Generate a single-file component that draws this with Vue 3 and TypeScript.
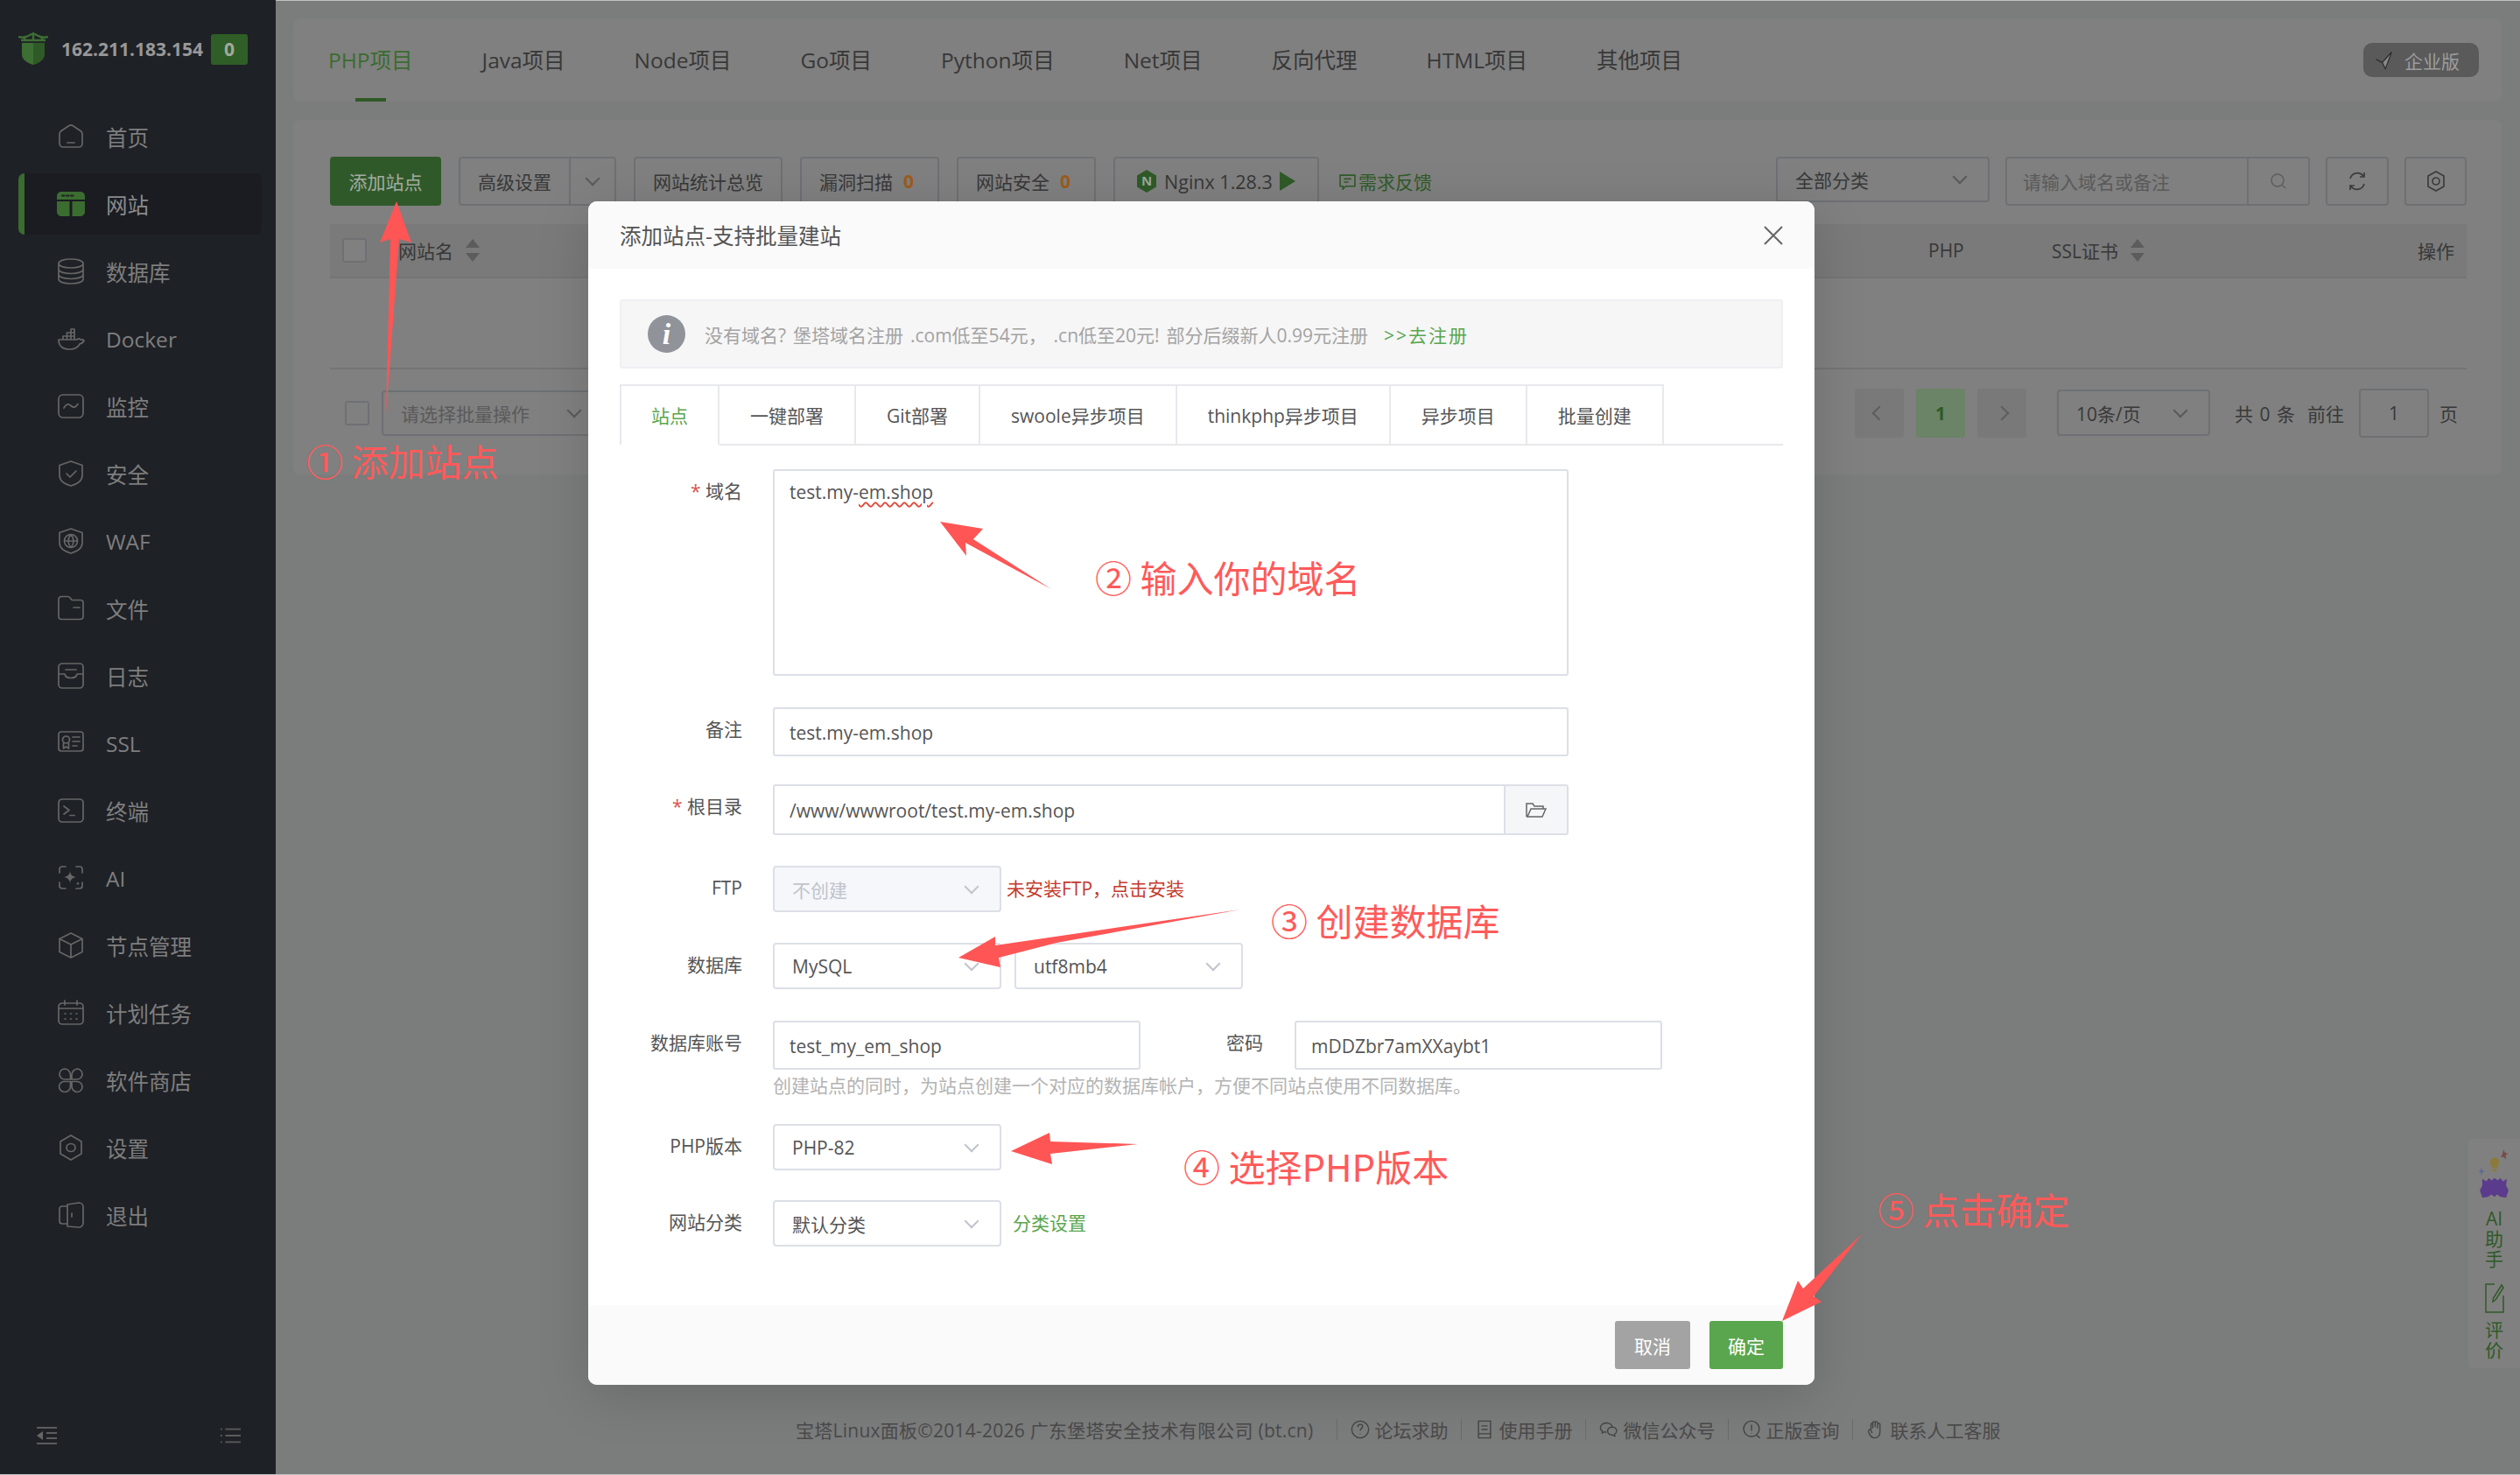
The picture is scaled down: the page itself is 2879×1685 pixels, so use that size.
<script setup lang="ts">
interface NavItem {
  name: string
  d: string
  fill?: string
  active?: boolean
}

const navItems: NavItem[] = [
  { name: '首页', d: 'M3 13c0-1.500.6-2.500 2-3.500L14 3.500c1.300-.8 2.700-.8 4 0l9 6c1.400 1 2 2 2 3.500v11c0 2.200-1.800 4-4 4H7c-2.200 0-4-1.800-4-4Z M12 23h8' },
  { name: '网站', d: '', active: true },
  { name: '数据库', d: 'M2 7c0-3 6-5 14-5s14 2 14 5v18c0 3-6 5-14 5S2 28 2 25Z M2 7c0 3 6 5 14 5s14-2 14-5 M2 13.500c0 3 6 5 14 5s14-2 14-5 M2 19.500c0 3 6 5 14 5s14-2 14-5' },
  { name: 'Docker', d: 'M2 17h21c.8-1.500 3-1.500 4 0 1.500-.3 3 0 4 1-1.500 3-3 3.500-4.500 3.500C24 26 20 28 15 28 7 28 2 25 2 17Z M7 17v-4h13v4 M11.500 17v-4 M16 17v-4 M11.500 13V9H20v4 M16 13V9 M16 9V5h4v4' },
  { name: '监控', d: 'M7 3h18c2.800 0 5 2.200 5 5v16c0 2.800-2.200 5-5 5H7c-2.800 0-5-2.200-5-5V8c0-2.800 2.200-5 5-5Z M8 18c3-5 5-5 8-2.500s5 2.500 8-2' },
  { name: '安全', d: 'M16 2 29 6.500V18c0 6-6 10-13 12C9 28 3 24 3 18V6.500Z M11 16l4 4 7-7' },
  { name: 'WAF', d: 'M16 2 29 6.500V18c0 6-6 10-13 12C9 28 3 24 3 18V6.500Z M16 8.500a7.500 7.500 0 1 0 0 15 7.500 7.500 0 0 0 0-15Z M8.500 16h15 M16 8.500c-4 4.500-4 10.500 0 15 4-4.500 4-10.500 0-15Z' },
  { name: '文件', d: 'M2 6c0-2 1.500-3.500 3.500-3.500h7c1.200 0 2 .5 2.700 1.500l2 2.500H27c1.700 0 3 1.300 3 3V25c0 2-1.500 3.500-3.500 3.500h-21C3.500 28.500 2 27 2 25Z M19 15h7' },
  { name: '日志', d: 'M6 2h20c2.200 0 4 1.800 4 4v20c0 2.200-1.800 4-4 4H6c-2.200 0-4-1.800-4-4V6c0-2.200 1.800-4 4-4Z M2 14h7c1 6 13 6 14 0h7 M10 9h12' },
  { name: 'SSL', d: 'M5 3h22c1.700 0 3 1.300 3 3v16c0 1.700-1.300 3-3 3H5c-1.700 0-3-1.300-3-3V6c0-1.700 1.300-3 3-3Z M10.500 8a4 4 0 1 0 0 8 4 4 0 0 0 0-8Z M7.500 16v6l3-2 3 2v-6 M18 9h8 M18 14h8 M18 19h5' },
  { name: '终端', d: 'M6 3h20c2.200 0 4 1.800 4 4v18c0 2.200-1.800 4-4 4H6c-2.200 0-4-1.800-4-4V7c0-2.200 1.800-4 4-4Z M8 11l6 4.500-6 4.500 M15 21.500h5' },
  {
    name: 'AI',
    d: 'M10 3H6C4 3 3 4 3 6v4 M22 3h4c2 0 3 1 3 3v4 M10 28H6c-2 0-3-1-3-3v-4 M22 28h4c2 0 3-1 3-3v-4',
    fill: 'M15 8c.5 4 2.500 6 6.500 7-4 1-6 3-6.500 7-.5-4-2.500-6-6.500-7 4-1 6-3 6.500-7Z M24 20c.2 1.500 1 2 2.200 2.300-1.200.3-2 1-2.200 2.300-.2-1.300-1-2-2.200-2.300 1.200-.3 2-.8 2.200-2.300Z'
  },
  { name: '节点管理', d: 'M16 2 29 8.500v15L16 30 3 23.500v-15Z M3 8.500 16 15l13-6.500 M16 15v15' },
  { name: '计划任务', d: 'M6 5h20c2.200 0 4 1.800 4 4v16c0 2.200-1.800 4-4 4H6c-2.200 0-4-1.800-4-4V9c0-2.200 1.800-4 4-4Z M9 2v5 M23 2v5 M2 11h28 M9 17h1 M15.500 17h1 M22 17h1 M9 23h1 M15.500 23h1 M22 23h1' },
  { name: '软件商店', d: 'M9 3a7 7 0 0 1 6.500 7v5H9a6 6 0 0 1 0-12Z M23 3a6 6 0 0 1 0 12h-6v-5a7 7 0 0 1 6-7Z M9 17.500h6.500V23a6.500 6.500 0 0 1-13 0 6 6 0 0 1 6.500-5.500Z M17 17.500h6a6 6 0 0 1 0 12 6.500 6.500 0 0 1-6-6.500Z' },
  { name: '设置', d: 'M16 2 28 9v14l-12 7-12-7V9Z M16 11.500c3 0 5 2 5 4.500s-2 4.500-5 4.500-5-2-5-4.500 2-4.500 5-4.500Z' },
  { name: '退出', d: 'M12 6H6C4.300 6 3 7.300 3 9v14c0 1.700 1.300 3 3 3h6 M12 4l13-2c2.800 0 5 2.200 5 5v18c0 2.800-2.200 5-5 5l-13-1Z M17 14v4' }
]

const projectTabs = ['PHP项目', 'Java项目', 'Node项目', 'Go项目', 'Python项目', 'Net项目', '反向代理', 'HTML项目', '其他项目']
const siteTabs = ['站点', '一键部署', 'Git部署', 'swoole异步项目', 'thinkphp异步项目', '异步项目', '批量创建']

const footerLinks = [
  { text: '论坛求助', d: 'M8 1a7 7 0 1 0 0 14A7 7 0 0 0 8 1Z M6 6c0-3 4-3 4-.5 0 1.700-2 1.700-2 3.500 M8 11.500v.5' },
  { text: '使用手册', d: 'M3 1h10v14H3Z M5.500 5h5 M5.500 8h5 M3 11.500h10' },
  { text: '微信公众号', d: 'M6 2.500C3 2.500 1 4.500 1 6.500c0 1.300.7 2.300 1.800 3L2.500 11l2-1c.5.1 1 .2 1.500.2 M11 6c-2.500 0-4 1.500-4 3.300s1.500 3.200 4 3.200l2 1-.3-1.500c1-.6 1.800-1.500 1.800-2.700C14.500 7.500 13 6 11 6Z M11 6c-.4-2-2.500-3.500-5-3.500' },
  { text: '正版查询', d: 'M8 1a6.500 6.500 0 1 0 0 13A6.500 6.500 0 0 0 8 1Z M8 4v5 M8 11v.5 M12 12.500l3 2.500' },
  { text: '联系人工客服', d: 'M4 8V4c0-1.500 1.500-1.500 1.500 0v3 M5.500 6V2.500C5.500 1 7.500 1 7.500 2.500V6 M7.500 6V2.500C7.500 1 9.500 1 9.500 2.500V7 M9.500 7V4c0-1.500 2-1.500 2 0v6c0 3-1.500 5-4.500 5S3 13 2 10c-.5-2 1.500-3 2-1l1 2' }
]

const arrows = [
  '453,230 470,277 456,273 441,474 446,273 434,277',
  '1074,596 1123,604 1112,616 1201,673 1103,620 1104,635',
  '1095,1094 1137,1070 1137,1080 1417,1039 1207,1077 1141,1094 1143,1105',
  '1155,1315 1199,1294 1200,1304 1300,1307 1200,1318 1202,1330',
  '2036,1509 2054,1463 2060,1472 2127,1410 2072,1481 2081,1487'
]
</script>

<template>
  <div class="layout">
    <aside class="sidebar">
      <div class="brand">
        <svg class="brand-logo" viewBox="0 0 34 38">
          <path class="logo-right" d="M17 12h13v13c0 6-6 10-13 12Z" />
          <path class="logo-left" d="M17 12H4v13c0 6 6 10 13 12Z" />
          <path class="logo-roof" d="M0 5c6 2 10 0 17-4 7 4 11 6 17 4M3 9h28M7 5v5M27 5v5M17 0v9" />
        </svg>
        <span class="brand-ip">162.211.183.154</span>
        <span class="brand-badge">0</span>
      </div>
      <nav class="nav">
        <a v-for="item in navItems" :key="item.name" class="nav-item" :class="{ active: item.active }">
          <svg v-if="item.active" class="nav-icon" viewBox="0 0 32 32">
            <path class="site-fill" d="M5 2h22c2.800 0 5 2.200 5 5v4H0V7c0-2.800 2.200-5 5-5Z M0 13h14.500v17H5c-2.800 0-5-2.200-5-5Z M17.500 13H32v12c0 2.800-2.200 5-5 5h-9.500Z" />
            <path class="site-dots" d="M6 6.500h2.500M11 6.500h2.500M16 6.500h2.500" />
          </svg>
          <svg v-else class="nav-icon" viewBox="0 0 32 32">
            <path :d="item.d" />
            <path v-if="item.fill" class="icon-fill" :d="item.fill" />
          </svg>
          <span>{{ item.name }}</span>
        </a>
      </nav>
      <div class="side-foot">
        <svg viewBox="0 0 24 22" class="foot-icon"><path d="M1 2h23M12 8h12M12 14h12M1 20h23" /><path class="icon-fill" d="M8 6v10L1 11Z" /></svg>
        <svg viewBox="0 0 26 20" class="foot-icon"><path d="M7 2h19M7 10h19M7 18h19M1 2h2M1 10h2M1 18h2" /></svg>
      </div>
    </aside>

    <main class="main">
      <section class="card tabs-card">
        <div class="project-tabs">
          <a v-for="(tab, i) in projectTabs" :key="tab" class="project-tab" :class="{ on: i === 0 }">{{ tab }}</a>
        </div>
        <div class="ent-badge">
          <svg viewBox="0 0 20 20"><path d="M2 9l6 3 9-10-6 16-3-6" /></svg>
          企业版
        </div>
      </section>

      <section class="card sites-card">
        <div class="toolbar">
          <button class="btn btn-add">添加站点</button>
          <div class="btn btn-split"><span>高级设置</span><span class="split-arrow"><i class="chev" /></span></div>
          <button class="btn">网站统计总览</button>
          <button class="btn btn-count">漏洞扫描<b>0</b></button>
          <button class="btn btn-count">网站安全<b>0</b></button>
          <button class="btn btn-nginx">
            <svg class="nginx-mark" viewBox="0 0 24 26"><path d="M12 0l11 6.500v13L12 26 1 19.500v-13Z" /><text x="12" y="18" text-anchor="middle">N</text></svg>
            Nginx 1.28.3
            <i class="play" />
          </button>
          <a class="feedback">
            <svg viewBox="0 0 18 18"><path d="M1 2h16v12H7l-3 3v-3H1Z M5 6h8M5 9.500h5" /></svg>
            需求反馈
          </a>
          <div class="toolbar-right">
            <div class="select page-select cat-select"><span>全部分类</span><i class="chev" /></div>
            <div class="search">
              <span>请输入域名或备注</span>
              <span class="search-btn">
                <svg viewBox="0 0 20 20"><path d="M9 2a7 7 0 1 0 0 14A7 7 0 0 0 9 2Z M14 14l4 4" /></svg>
              </span>
            </div>
            <div class="icon-btn"><svg viewBox="0 0 22 24"><path d="M3 9a8.500 8.500 0 0 1 15-3l1 1M19 15a8.500 8.500 0 0 1-15 3l-1-1M19 2v5h-5M3 22v-5h5" /></svg></div>
            <div class="icon-btn icon-btn-last"><svg viewBox="0 0 22 24"><path d="M11 1l9 5v12l-9 5-9-5V6Z M11 8a4 4 0 1 0 0 8 4 4 0 0 0 0-8Z" /></svg></div>
          </div>
        </div>

        <div class="table-head">
          <div class="th-check"><i class="checkbox" /></div>
          <div class="th-name">网站名<i class="sort" /></div>
          <div class="th-php">PHP</div>
          <div class="th-ssl">SSL证书<i class="sort" /></div>
          <div>操作</div>
        </div>
        <div class="table-empty" />

        <div class="pager-row">
          <i class="checkbox batch-check" />
          <div class="select page-select batch-select"><span>请选择批量操作</span><i class="chev" /></div>
          <div class="pager">
            <span class="pg-btn"><i class="chev chev-left" /></span>
            <span class="pg-btn pg-on">1</span>
            <span class="pg-btn"><i class="chev chev-right" /></span>
            <div class="select page-select size-select"><span>10条/页</span><i class="chev" /></div>
            <span class="pg-total">共 0 条</span>
            <span>前往</span>
            <span class="pg-input">1</span>
            <span>页</span>
          </div>
        </div>
      </section>

      <footer class="page-foot">
        <span class="copyright">宝塔Linux面板©2014-2026 广东堡塔安全技术有限公司 (bt.cn)</span>
        <a v-for="link in footerLinks" :key="link.text" class="foot-link">
          <svg viewBox="0 0 16 16"><path :d="link.d" /></svg>
          {{ link.text }}
        </a>
      </footer>
    </main>

    <div class="ai-float">
      <svg class="ai-art" viewBox="0 0 40 62">
        <path fill="#7a4a48" d="M31 0l1.500 4 4 1-3 2 .5 5-3.500-3-3 1 2-4Z" />
        <path fill="#8c7a3c" d="M20 10a6 6 0 0 1 4 10l-.5 3h-7l-.5-3a6 6 0 0 1 4-10Z M17.500 24h5v3h-5Z" />
        <path fill="#566a96" d="M4 22l1 4 3 1-3 1-1 4-1-4-3-1 3-1Z" />
        <path fill="#5b3b8c" d="M5 36l5 3 3-4 3 3 4-3 4 3 3-3 3 4 5-3-1 8 3 6-3 9-7-1-4-3-3 3-4-3-4 3-7 1-3-9 3-6Z" />
      </svg>
      <span class="ai-word ai-first">AI</span>
      <span class="ai-word">助</span>
      <span class="ai-word">手</span>
      <svg class="ai-edit" viewBox="0 0 22 34"><path d="M11 1H1v32h20V14M19 2l2 3-9 14-3 2 .5-4Z" /></svg>
      <span class="ai-word">评</span>
      <span class="ai-word">价</span>
    </div>

    <div class="dialog">
      <header class="dialog-head">
        <span>添加站点-支持批量建站</span>
        <svg class="dialog-close" viewBox="0 0 22 22"><path d="M1 1l20 20M21 1L1 21" /></svg>
      </header>

      <div class="dialog-body">
        <div class="notice">
          <span class="notice-icon">i</span>
          <span class="notice-text">没有域名? 堡塔域名注册 .com低至54元， .cn低至20元! 部分后缀新人0.99元注册</span>
          <a class="green-link">&gt;&gt;去注册</a>
        </div>

        <div class="site-tabs">
          <a v-for="(tab, i) in siteTabs" :key="tab" class="site-tab" :class="{ on: i === 0 }">{{ tab }}</a>
        </div>

        <div class="form">
          <div class="row row-domain">
            <label class="label"><em>*</em> 域名</label>
            <div class="field textarea">test.my-<span class="typo">em.shop</span></div>
          </div>
          <div class="row row-remark">
            <label class="label">备注</label>
            <div class="field wide">test.my-em.shop</div>
          </div>
          <div class="row row-root">
            <label class="label"><em>*</em> 根目录</label>
            <div class="field wide root-field">
              <span class="root-value">/www/wwwroot/test.my-em.shop</span>
              <span class="root-btn">
                <svg viewBox="0 0 24 20"><path d="M1 18V3h7l2 3h10v3M1 18h18l4-9H6l-4 9" /></svg>
              </span>
            </div>
          </div>
          <div class="row row-ftp">
            <label class="label">FTP</label>
            <div class="select disabled"><span>不创建</span><i class="chev" /></div>
            <a class="ftp-tip">未安装FTP，点击安装</a>
          </div>
          <div class="row row-db">
            <label class="label">数据库</label>
            <div class="select"><span>MySQL</span><i class="chev" /></div>
            <div class="select charset"><span>utf8mb4</span><i class="chev" /></div>
          </div>
          <div class="row row-account">
            <label class="label">数据库账号</label>
            <div class="field account">test_my_em_shop</div>
            <label class="label pwd-label">密码</label>
            <div class="field account">mDDZbr7amXXaybt1</div>
          </div>
          <p class="hint">创建站点的同时，为站点创建一个对应的数据库帐户，方便不同站点使用不同数据库。</p>
          <div class="row row-php">
            <label class="label">PHP版本</label>
            <div class="select"><span>PHP-82</span><i class="chev" /></div>
          </div>
          <div class="row row-cat">
            <label class="label">网站分类</label>
            <div class="select"><span>默认分类</span><i class="chev" /></div>
            <a class="green-link cat-link">分类设置</a>
          </div>
        </div>
      </div>

      <footer class="dialog-foot">
        <button class="dlg-btn dlg-cancel">取消</button>
        <button class="dlg-btn dlg-ok">确定</button>
      </footer>
    </div>

    <!-- tutorial marks drawn on top of the screenshot -->
    <svg class="marks" viewBox="0 0 2879 1685">
      <polygon v-for="pts in arrows" :key="pts" :points="pts" />
    </svg>
    <span class="note note-1">① 添加站点</span>
    <span class="note note-2">② 输入你的域名</span>
    <span class="note note-3">③ 创建数据库</span>
    <span class="note note-4">④ 选择PHP版本</span>
    <span class="note note-5">⑤ 点击确定</span>
  </div>
</template>

<style scoped>
* { box-sizing: border-box; }

.layout {
  position: relative;
  display: flex;
  box-sizing: border-box;
  width: 2879px;
  height: 1685px;
  overflow: hidden;
  border-bottom: 1px solid #c0c2c2;
  background: #7b7c7c;
  font-family: "Open Sans", "Noto Sans CJK SC", sans-serif;
  font-size: 21px;
  color: #383838;
}

a { cursor: pointer; }

button {
  font: inherit;
  cursor: pointer;
}

/* sidebar */
.sidebar {
  display: flex;
  flex-direction: column;
  flex: 0 0 315px;
  background: #1e2126;
}

.brand {
  display: flex;
  align-items: center;
  height: 112px;
  padding: 0 21px;
}

.brand-logo {
  width: 34px;
  height: 38px;
  margin-right: 15px;
}

.logo-right { fill: #2f5a27; }
.logo-left { fill: #3d6e33; }

.logo-roof {
  fill: none;
  stroke: #3d6e33;
  stroke-width: 2.500;
}

.brand-ip {
  font-size: 21px;
  font-weight: 700;
  color: #989898;
}

.brand-badge {
  width: 42px;
  height: 35px;
  margin-left: 9px;
  border-radius: 3px;
  background: #2f5f26;
  font-weight: 700;
  line-height: 35px;
  text-align: center;
  color: #a3a8a0;
}

.nav {
  display: flex;
  flex-direction: column;
  flex: 1;
  gap: 7px;
  padding: 9px 16px 0 21px;
}

.nav-item {
  position: relative;
  display: flex;
  align-items: center;
  gap: 24px;
  height: 70px;
  padding-left: 44px;
  border-radius: 7px;
  font-size: 24.500px;
  color: #7e7e7e;
}

.nav-item.active {
  background: #1a1c21;
  color: #8a8a8a;
}

.nav-item.active::before {
  content: "";
  position: absolute;
  top: 0;
  left: 0;
  width: 7px;
  height: 70px;
  border-radius: 7px 0 0 7px;
  background: #3b6c30;
}

.nav-icon {
  flex: none;
  width: 32px;
  height: 32px;
  fill: none;
  stroke: #666;
  stroke-width: 1.700;
  stroke-linejoin: round;
  stroke-linecap: round;
}

.icon-fill {
  fill: #666;
  stroke: none;
}

.site-fill {
  fill: #3b6c30;
  stroke: none;
}

.site-dots {
  stroke: #1e2126;
  stroke-width: 2;
}

.side-foot {
  display: flex;
  align-items: center;
  justify-content: space-between;
  height: 88px;
  padding: 0 40px 0 41px;
}

.foot-icon {
  width: 24px;
  height: 22px;
  fill: none;
  stroke: #5c5c5c;
  stroke-width: 2;
}

/* page content */
.main {
  display: flex;
  flex-direction: column;
  flex: 1;
  min-width: 0;
  padding: 20px 21px 0 20px;
  border-top: 1px solid #c0c2c2;
}

.card {
  border-radius: 8px;
  background: #808080;
}

.tabs-card {
  display: flex;
  align-items: center;
  justify-content: space-between;
  height: 95px;
  padding: 0 26px 0 40px;
}

.project-tabs {
  display: flex;
  gap: 79px;
  height: 100%;
}

.project-tab {
  position: relative;
  display: flex;
  align-items: center;
  padding-bottom: 2px;
  font-size: 24.500px;
  white-space: nowrap;
  color: #383838;
}

.project-tab.on { color: #3b6c30; }

.project-tab.on::after {
  content: "";
  position: absolute;
  bottom: 0;
  left: 31px;
  width: 35px;
  height: 4px;
  background: #2f5a25;
}

.ent-badge {
  display: flex;
  align-items: center;
  gap: 11px;
  width: 132px;
  height: 39px;
  padding: 0 0 0 12px;
  border-radius: 10px;
  background: #5a5a5a;
  white-space: nowrap;
  color: #9c9c9c;
}

.ent-badge svg {
  flex: none;
  width: 24px;
  height: 24px;
  fill: #888;
  stroke: #2a2a2a;
}

.sites-card {
  height: 405px;
  margin-top: 21px;
  padding: 42px 40px 0 42px;
}

.toolbar {
  display: flex;
  align-items: flex-start;
  gap: 20px;
  height: 56px;
}

.btn {
  display: flex;
  align-items: center;
  height: 56px;
  padding: 0 20px;
  border: 2px solid #6e7073;
  border-radius: 4px;
  background: #808080;
  white-space: nowrap;
  color: #383838;
}

.btn b {
  margin-left: 12px;
  color: #9c5c1c;
}

.btn-count { padding-right: 27px; }

.btn-add {
  width: 127px;
  justify-content: center;
  padding: 0;
  border: 0;
  background: #30592a;
  color: #a4ada0;
}

.btn-split {
  padding: 0 0 0 20px;
}

.split-arrow {
  display: flex;
  align-items: center;
  justify-content: center;
  width: 52px;
  height: 100%;
  margin-left: 20px;
  border-left: 2px solid #6e7073;
}

.btn-nginx {
  gap: 8px;
  width: 235px;
  padding: 0 0 0 24px;
  font-size: 21.500px;
}

.nginx-mark {
  flex: none;
  width: 24px;
  height: 26px;
  fill: #2f5a27;
}

.nginx-mark text {
  fill: #9aa59a;
  font-size: 15px;
  font-weight: 700;
}

.play {
  width: 0;
  height: 0;
  border-top: 11px solid transparent;
  border-bottom: 11px solid transparent;
  border-left: 18px solid #2f5a27;
}

.feedback {
  display: flex;
  align-items: center;
  gap: 3px;
  height: 56px;
  margin-left: 3px;
  color: #2f5a27;
}

.feedback svg {
  width: 19px;
  height: 19px;
  fill: none;
  stroke: #2f5a27;
  stroke-width: 1.500;
}

.toolbar-right {
  display: flex;
  gap: 18px;
  margin-left: auto;
}

.chev {
  display: inline-block;
  flex: none;
  width: 12px;
  height: 12px;
  border-right: 2px solid #c0c4cc;
  border-bottom: 2px solid #c0c4cc;
  transform: translateY(-3px) rotate(45deg);
}

.select {
  display: flex;
  align-items: center;
  justify-content: space-between;
  width: 261px;
  height: 53px;
  padding: 0 26px 0 20px;
  border: 2px solid #dcdfe6;
  border-radius: 4px;
  background: #fff;
  color: #555;
}

.select.disabled {
  background: #f5f7fa;
  color: #c0c4cc;
}

.page-select {
  border-color: #6e7073;
  background: #808080;
  color: #383838;
}

.page-select .chev,
.btn .chev {
  border-color: #5a5a5a;
}

.cat-select {
  width: 244px;
  height: 52px;
}

.search {
  display: flex;
  align-items: center;
  justify-content: space-between;
  width: 348px;
  height: 56px;
  padding-left: 18px;
  border: 2px solid #6e7073;
  border-radius: 4px;
  color: #5a5a5a;
}

.search-btn,
.icon-btn {
  display: flex;
  align-items: center;
  justify-content: center;
}

.search-btn {
  width: 70px;
  height: 100%;
  border-left: 2px solid #6e7073;
}

.search-btn svg {
  width: 20px;
  height: 20px;
  fill: none;
  stroke: #5e5e5e;
  stroke-width: 1.500;
}

.icon-btn {
  width: 72px;
  height: 56px;
  border: 2px solid #6e7073;
  border-radius: 4px;
}

.icon-btn-last { width: 71px; }

.icon-btn svg {
  width: 22px;
  height: 24px;
  fill: none;
  stroke: #3c3c3c;
  stroke-width: 1.700;
}

/* site table */
.table-head {
  display: flex;
  align-items: center;
  height: 62px;
  margin-top: 21px;
  padding-right: 14px;
  background: #7a7a7a;
  border-bottom: 2px solid #747474;
  color: #383838;
}

.th-check {
  flex: 0 0 78px;
  padding-left: 14px;
}

.checkbox {
  display: block;
  width: 28px;
  height: 28px;
  border: 2px solid #6e7073;
  border-radius: 3px;
  background: #808080;
}

.th-name {
  display: flex;
  align-items: center;
  flex: 1;
}

.th-php { width: 141px; }

.th-ssl {
  display: flex;
  align-items: center;
  width: 418px;
}

.sort {
  position: relative;
  width: 16px;
  height: 26px;
  margin-left: 14px;
}

.sort::before,
.sort::after {
  content: "";
  position: absolute;
  left: 0;
  border-right: 8px solid transparent;
  border-left: 8px solid transparent;
}

.sort::before {
  top: 0;
  border-bottom: 10px solid #5c5c5c;
}

.sort::after {
  bottom: 0;
  border-top: 10px solid #5c5c5c;
}

.table-empty {
  height: 104px;
  border-bottom: 2px solid #747474;
}

.pager-row {
  display: flex;
  align-items: center;
  height: 57px;
  margin-top: 21px;
}

.batch-check { margin-left: 17px; }

.batch-select {
  width: 254px;
  height: 52px;
  margin-left: 14px;
  color: #5a5a5a;
}

.pager {
  display: flex;
  align-items: center;
  margin-left: auto;
  padding-right: 10px;
  color: #383838;
}

.pg-btn {
  display: flex;
  align-items: center;
  justify-content: center;
  width: 56px;
  height: 56px;
  margin-right: 14px;
  border-radius: 3px;
  background: #797979;
  font-weight: 700;
}

.pg-on {
  background: #6b8367;
  color: #2f5a25;
}

.chev-left {
  border-color: #5e5e5e;
  transform: rotate(135deg);
}

.chev-right {
  border-color: #5e5e5e;
  transform: rotate(-45deg);
}

.size-select {
  width: 175px;
  margin: 0 28px 0 21px;
}

.pg-total {
  margin-right: 14px;
  word-spacing: 2px;
}

.pg-input {
  width: 80px;
  height: 56px;
  margin: 0 12px 0 17px;
  border: 2px solid #6e7073;
  border-radius: 4px;
  line-height: 52px;
  text-align: center;
}

.page-foot {
  display: flex;
  align-items: center;
  height: 103px;
  margin-top: auto;
  padding-left: 574px;
  color: #4a4a4a;
  white-space: nowrap;
}

.copyright {
  margin-right: 27px;
  letter-spacing: 0.25px;
}

.foot-link {
  display: flex;
  align-items: center;
  gap: 5px;
  height: 24px;
  padding: 0 15px;
  border-left: 1px solid #6b6b6b;
}

.foot-link svg {
  width: 22px;
  height: 22px;
  fill: none;
  stroke: #444;
  stroke-width: 1;
}

.ai-float {
  position: absolute;
  top: 1301px;
  right: 0;
  display: flex;
  flex-direction: column;
  align-items: center;
  width: 59px;
  height: 262px;
  padding-top: 12px;
  border-radius: 6px 0 0 6px;
  background: #808080;
  color: #2f5a27;
}

.ai-art {
  flex: none;
  width: 40px;
  height: 58px;
}

.ai-word {
  height: 23px;
  line-height: 23px;
}

.ai-first { margin-top: 10px; }

.ai-edit {
  flex: none;
  width: 22px;
  height: 34px;
  margin: 16px 0 8px;
  fill: none;
  stroke: #2f5a27;
  stroke-width: 1.500;
}

/* dialog */
.dialog {
  position: absolute;
  top: 230px;
  left: 672px;
  display: flex;
  flex-direction: column;
  width: 1401px;
  height: 1352px;
  border-radius: 10px;
  background: #fff;
  box-shadow: 0 12px 60px rgba(0, 0, 0, 0.15);
  color: #555;
}

.dialog-head {
  display: flex;
  align-items: center;
  justify-content: space-between;
  flex: 0 0 77px;
  padding: 0 36px;
  border-radius: 10px 10px 0 0;
  background: #fafafa;
  font-size: 24.500px;
  color: #555;
}

.dialog-close {
  width: 22px;
  height: 22px;
  fill: none;
  stroke: #666;
  stroke-width: 2;
}

.dialog-body {
  flex: 1;
  padding: 35px 36px 0;
}

.notice {
  display: flex;
  align-items: center;
  height: 79px;
  padding-left: 30px;
  border: 2px solid #eff0f3;
  border-radius: 3px;
  background: #f6f6f6;
  color: #a3a3a3;
}

.notice-icon {
  width: 43px;
  height: 43px;
  margin-right: 22px;
  border-radius: 50%;
  background: #909399;
  font-family: "Liberation Serif", serif;
  font-size: 34px;
  font-style: italic;
  font-weight: 700;
  line-height: 43px;
  text-align: center;
  color: #fff;
}

.notice-text { word-spacing: 2.500px; }

.green-link { color: #5aa64e; }

.notice .green-link {
  margin-left: 18px;
  letter-spacing: 2px;
}

.site-tabs {
  display: flex;
  height: 70px;
  margin-top: 18px;
  border-bottom: 2px solid #e8e9ed;
}

.site-tab {
  display: flex;
  align-items: center;
  justify-content: center;
  height: 70px;
  padding: 0 35px;
  border: 2px solid #e8e9ed;
  border-left-width: 0;
  color: #555;
  white-space: nowrap;
}

.site-tab:first-child { border-left-width: 2px; }

.site-tab.on {
  padding: 0 34px;
  border-bottom-color: #fff;
  color: #5aa64e;
}

.form {
  display: flex;
  flex-direction: column;
  padding-top: 27px;
}

.row {
  display: flex;
  align-items: flex-start;
}

.row-remark { margin-top: 36px; }
.row-root { margin-top: 32px; }
.row-ftp { margin-top: 35px; }
.row-db { margin-top: 35px; }
.row-account { margin-top: 36px; }
.row-php { margin-top: 33px; }
.row-cat { margin-top: 34px; }

.label {
  flex: 0 0 140px;
  margin-right: 35px;
  line-height: 50px;
  text-align: right;
  color: #555;
}

.label em {
  font-style: normal;
  color: #d9534f;
}

.field {
  height: 56px;
  padding-left: 17px;
  border: 2px solid #dcdfe6;
  border-radius: 3px;
  line-height: 54px;
  color: #555;
}

.wide { width: 909px; }

.textarea {
  width: 909px;
  height: 236px;
  line-height: 48px;
}

.typo {
  text-decoration: underline wavy #e04a3a 2px;
  text-underline-offset: 3px;
}

.root-field {
  display: flex;
  justify-content: space-between;
  height: 58px;
  padding-right: 0;
  line-height: 56px;
}

.root-btn {
  display: flex;
  align-items: center;
  justify-content: center;
  width: 72px;
  border-left: 2px solid #dcdfe6;
  background: #f5f6f8;
}

.root-btn svg {
  width: 24px;
  height: 20px;
  fill: none;
  stroke: #666;
  stroke-width: 1.500;
}

.ftp-tip {
  margin-left: 6px;
  line-height: 53px;
  color: #c4392c;
}

.charset { margin-left: 15px; }

.account { width: 420px; }

.pwd-label {
  flex: 0 0 43px;
  margin: 0 36px 0 97px;
}

.hint {
  margin: 7px 0 0 175px;
  line-height: 22px;
  color: #b3b3b3;
}

.cat-link {
  margin-left: 13px;
  line-height: 53px;
}

.dialog-foot {
  display: flex;
  justify-content: flex-end;
  flex: 0 0 91px;
  gap: 22px;
  padding: 18px 36px 0 0;
  border-radius: 0 0 10px 10px;
  background: #fafafa;
}

.dlg-btn {
  height: 55px;
  padding: 0;
  border: 0;
  border-radius: 3px;
  color: #fff;
}

.dlg-cancel {
  width: 86px;
  background: #a3a3a3;
}

.dlg-ok {
  width: 84px;
  background: #5aa64e;
}

/* tutorial annotations */
.marks {
  position: absolute;
  top: 0;
  left: 0;
  width: 2879px;
  height: 1685px;
  fill: #ff5555;
  pointer-events: none;
}

.note {
  position: absolute;
  font-family: "Noto Sans CJK SC", sans-serif;
  font-size: 42px;
  line-height: 50px;
  white-space: nowrap;
  color: #ff5a5a;
}

.note-1 { top: 501px; left: 350px; }
.note-2 { top: 634px; left: 1251px; }
.note-3 { top: 1026px; left: 1452px; }
.note-4 { top: 1307px; left: 1352px; }
.note-5 { top: 1356px; left: 2145px; }
</style>
